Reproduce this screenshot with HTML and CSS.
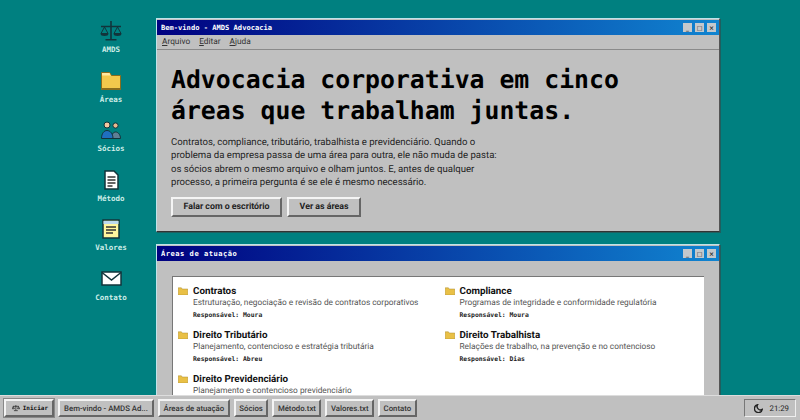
FILE: index.html
```html
<!DOCTYPE html>
<html lang="pt">
<head>
<meta charset="utf-8">
<title>AMDS Advocacia</title>
<link rel="stylesheet" href="styles.css">
</head>
<body>
<div class="desktop">
  <nav class="icons">
    <a class="icon">
      <div class="glyph"><svg width="22" height="20" viewBox="0 0 22 20" fill="none" stroke="#12343b"><path d="M11 0v18M5.500 18.700h11M1 5.500h20" stroke-width="1.600"/><path d="M4.500 6L1 12.500h7zM17.500 6L14 12.500h7z" stroke-width="1"/><path d="M.5 12.500h8a4 2.500 0 0 1-8 0zM13.500 12.500h8a4 2.500 0 0 1-8 0z" fill="#12343b" stroke="none"/></svg></div>
      <span>AMDS</span>
    </a>
    <a class="icon">
      <div class="glyph"><svg width="20" height="18" viewBox="0 0 20 18"><path d="M.5 .5h8l2 3h9v14H.5z" fill="#f2c94c" stroke="#8a6d1d"/><path d="M1 1h7.500l1.200 2.500H1z" fill="#ffe9a0"/><path d="M1 16h18v1H1z" fill="#8a6d1d"/></svg></div>
      <span>Áreas</span>
    </a>
    <a class="icon">
      <div class="glyph"><svg width="20" height="18" viewBox="0 0 20 18"><circle cx="6" cy="4" r="3" fill="#f4c7a1" stroke="#12343b"/><circle cx="14.500" cy="4.500" r="2.600" fill="#e9b98f" stroke="#12343b"/><path d="M10 17.500c0-4 2.500-6.500 4.700-6.500s4.800 2.500 4.800 6.500z" fill="#5f7f95" stroke="#12343b"/><path d="M.5 17.500c0-5 2.500-8 5.500-8s6 3 6 8z" fill="#1f6fc0" stroke="#12343b"/></svg></div>
      <span>Sócios</span>
    </a>
    <a class="icon">
      <div class="glyph"><svg width="15" height="20" viewBox="0 0 15 20"><path d="M1 1h9l4 4v14H1z" fill="#fff" stroke="#12343b" stroke-width="1.500"/><path d="M3.500 7h8M3.500 10h8M3.500 13h8M3.500 16h5" stroke="#333" stroke-width="1.300"/></svg></div>
      <span>Método</span>
    </a>
    <a class="icon">
      <div class="glyph"><svg width="18" height="20" viewBox="0 0 18 20"><rect x="1" y="1" width="16" height="18" fill="#fff59d" stroke="#12343b" stroke-width="1.500"/><path d="M1.500 2h15v3h-15z" fill="#bcd9ee"/><path d="M4 8h10M4 11h10M4 14h7" stroke="#333" stroke-width="1.300"/></svg></div>
      <span>Valores</span>
    </a>
    <a class="icon">
      <div class="glyph"><svg width="21" height="15" viewBox="0 0 21 15"><rect x="1" y="1" width="19" height="13" fill="#fff" stroke="#12343b" stroke-width="1.500"/><path d="M1 1.500l9.500 7.500 9.500-7.500" fill="none" stroke="#12343b" stroke-width="1.500"/></svg></div>
      <span>Contato</span>
    </a>
  </nav>
  <main class="windows">
    <section class="window">
      <header class="titlebar">
        <span class="title">Bem-vindo - AMDS Advocacia</span>
        <div class="controls"><button class="ctl">_</button><button class="ctl">□</button><button class="ctl">×</button></div>
      </header>
      <div class="menu"><span><u>A</u>rquivo</span><span><u>E</u>ditar</span><span><u>A</u>juda</span></div>
      <div class="hero">
        <h1>Advocacia corporativa em cinco<br>áreas que trabalham juntas.</h1>
        <p>Contratos, compliance, tributário, trabalhista e previdenciário. Quando o<br>problema da empresa passa de uma área para outra, ele não muda de pasta:<br>os sócios abrem o mesmo arquivo e olham juntos. E, antes de qualquer<br>processo, a primeira pergunta é se ele é mesmo necessário.</p>
        <div class="actions"><button class="btn">Falar com o escritório</button><button class="btn">Ver as áreas</button></div>
      </div>
    </section>
    <section class="window">
      <header class="titlebar">
        <span class="title wide">Áreas de atuação</span>
        <div class="controls"><button class="ctl">_</button><button class="ctl">□</button><button class="ctl">×</button></div>
      </header>
      <div class="panel">
        <div class="list">
          <article class="area"><svg class="folder" viewBox="0 0 12 10"><path d="M0 1h4l1 1.500h7V10H0z" fill="#e9c046" stroke="#a98a2a" stroke-width=".6"/></svg><div><h2>Contratos</h2><p>Estruturação, negociação e revisão de contratos corporativos</p><small>Responsável: Moura</small></div></article>
          <article class="area"><svg class="folder" viewBox="0 0 12 10"><path d="M0 1h4l1 1.500h7V10H0z" fill="#e9c046" stroke="#a98a2a" stroke-width=".6"/></svg><div><h2>Compliance</h2><p>Programas de integridade e conformidade regulatória</p><small>Responsável: Moura</small></div></article>
          <article class="area"><svg class="folder" viewBox="0 0 12 10"><path d="M0 1h4l1 1.500h7V10H0z" fill="#e9c046" stroke="#a98a2a" stroke-width=".6"/></svg><div><h2>Direito Tributário</h2><p>Planejamento, contencioso e estratégia tributária</p><small>Responsável: Abreu</small></div></article>
          <article class="area"><svg class="folder" viewBox="0 0 12 10"><path d="M0 1h4l1 1.500h7V10H0z" fill="#e9c046" stroke="#a98a2a" stroke-width=".6"/></svg><div><h2>Direito Trabalhista</h2><p>Relações de trabalho, na prevenção e no contencioso</p><small>Responsável: Dias</small></div></article>
          <article class="area"><svg class="folder" viewBox="0 0 12 10"><path d="M0 1h4l1 1.500h7V10H0z" fill="#e9c046" stroke="#a98a2a" stroke-width=".6"/></svg><div><h2>Direito Previdenciário</h2><p>Planejamento e contencioso previdenciário</p></div></article>
        </div>
      </div>
    </section>
  </main>
</div>
<footer class="taskbar">
  <button class="task start"><svg width="12" height="10" viewBox="0 0 32 26" fill="none" stroke="#222" stroke-width="3"><path d="M16 1v22M8 24h16M4 6h24M5 7l-4 9h9zM27 7l-4 9h9z"/></svg>Iniciar</button>
  <button class="task w1">Bem-vindo - AMDS Ad...</button>
  <button class="task">Áreas de atuação</button>
  <button class="task">Sócios</button>
  <button class="task">Método.txt</button>
  <button class="task">Valores.txt</button>
  <button class="task">Contato</button>
  <div class="tray"><svg width="9" height="9" viewBox="0 0 10 10"><path d="M4 .8A4.400 4.400 0 1 0 9.200 6 3.800 3.800 0 0 1 4 .8z" fill="none" stroke="#222" stroke-width="1.500"/></svg><span>21:29</span></div>
</footer>
</body>
</html>
```

FILE: styles.css
```css
* { box-sizing: border-box; }
html, body { margin: 0; height: 420px; overflow: hidden; }
body { background: #008080; font-family: Roboto, Inter, sans-serif; color: #222; position: relative; text-rendering: geometricPrecision; }
.desktop { display: flex; height: 420px; padding: 18px 0 0 86px; gap: 20px; overflow: hidden; }
.icons { width: 50px; display: flex; flex-direction: column; flex: none; }
.icon { height: 49.500px; display: flex; flex-direction: column; align-items: center; }
.glyph { height: 26px; display: flex; align-items: center; }
.icon svg { display: block; }
.icon span { margin-top: 1px; font: 700 7.500px/10px "DejaVu Sans Mono", monospace; color: #cfeee8; white-space: nowrap; }
.windows { width: 564px; flex: none; display: flex; flex-direction: column; gap: 12px; }
.window { flex: none; background: #c0c0c0; padding: 1px 0 0; border: 1px solid; border-color: #bfe3ea #555 #333 #bfe3ea; box-shadow: 1px 1px 0 #1f5f5f; }
.titlebar { height: 15px; display: flex; align-items: center; justify-content: space-between; padding: 0 3px 0 4px; background: linear-gradient(90deg, #000080, #1084d0); }
.title { font: 700 7.100px/1 "DejaVu Sans Mono", monospace; color: #fff; }
.wide { letter-spacing: .5px; }
.controls { display: flex; gap: 3px; }
.ctl { width: 9px; height: 9px; padding: 0; border: 0; background: #c4c8cc; font: 700 6px/9px "DejaVu Sans", sans-serif; color: #222; }
.menu { height: 15px; display: flex; gap: 9px; align-items: center; padding: 0 5px; border-bottom: 1px solid #8a8a8a; font-size: 8.300px; color: #333; }
.hero { padding: 14px 14px 14px; }
h1 { margin: 0; white-space: nowrap; font: 700 24.800px/31px "DejaVu Sans Mono", monospace; color: #000; }
.hero p { margin: 10px 0 0; white-space: nowrap; font-size: 9.600px; line-height: 13.400px; color: #222; }
.actions { display: flex; gap: 5px; margin-top: 7px; }
.btn, .task { background: #c0c0c0; border: 2px solid; border-color: #f4f4f4 #666 #666 #f4f4f4; font-family: Roboto, Inter, sans-serif; color: #222; text-rendering: geometricPrecision; }
.btn { height: 20px; padding: 0 10.500px; font-size: 8.800px; font-weight: 700; }
.panel { padding: 15px 15px 0; height: 150px; }
.list { background: #fff; height: 200px; padding: 9.500px 5px; border-top: 1px solid #777; border-left: 1px solid #777; display: grid; grid-template-columns: 266.500px 1fr; grid-auto-rows: 44px; }
.area { display: flex; gap: 5px; }
.folder { width: 10px; height: 8px; flex: none; margin-top: 1px; }
.area h2 { margin: 0; font-size: 9.800px; line-height: 11px; font-weight: 700; color: #111; }
.area p { margin: 1px 0 0; font-size: 8.300px; line-height: 11px; color: #555; white-space: nowrap; }
.area small { display: block; margin-top: 1px; font: 700 6.400px/10px "DejaVu Sans Mono", monospace; color: #222; }
.taskbar { position: absolute; left: 0; right: 0; bottom: 0; height: 25px; background: #c0c0c0; border-top: 1px solid #ddd; display: flex; align-items: center; gap: 4px; padding: 0 4px; }
.task { height: 18px; padding: 0 3.500px; font-size: 7.800px; font-weight: 500; white-space: nowrap; color: #333; }
.start { display: flex; align-items: center; gap: 3px; font: 700 6px "DejaVu Sans Mono", monospace; box-shadow: 0 0 0 1px #888; width: 50px; color: #111; padding: 0 4px 0 6px; }
.w1 { width: 96px; }
.tray { margin-left: auto; width: 52px; height: 18px; display: flex; align-items: center; justify-content: space-between; padding: 0 6px 0 9px; border: 1px solid; border-color: #777 #eee #eee #777; font-size: 7.800px; }
```
